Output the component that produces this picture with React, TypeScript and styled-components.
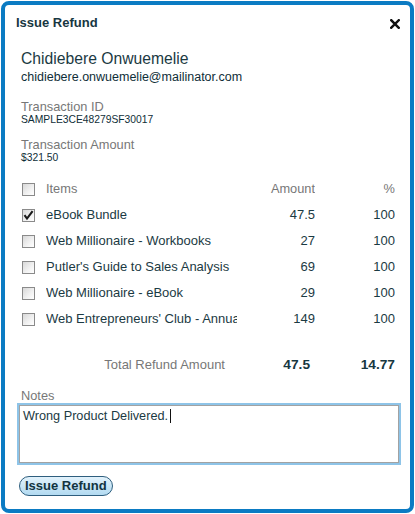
import React from 'react';
import styled, { createGlobalStyle } from 'styled-components';

const GlobalStyle = createGlobalStyle`
  html, body {
    margin: 0;
    padding: 0;
    background: #fff;
  }
  body {
    font-family: "Liberation Sans", Arial, sans-serif;
    color: #1b3a43;
  }
  * { box-sizing: border-box; }
`;

type Item = { name: string; amount: string; percent: string; checked?: boolean };

const items: Item[] = [
  { name: 'eBook Bundle', amount: '47.5', percent: '100', checked: true },
  { name: 'Web Millionaire - Workbooks', amount: '27', percent: '100' },
  { name: "Putler's Guide to Sales Analysis", amount: '69', percent: '100' },
  { name: 'Web Millionaire - eBook', amount: '29', percent: '100' },
  { name: "Web Entrepreneurs' Club - Annual Membership", amount: '149', percent: '100' },
];

// --- Components ---
const CheckBox: React.FC<{ checked?: boolean }> = ({ checked }) => (
  <Box>
    {checked && (
      <svg width="11" height="11" viewBox="0 0 11 11">
        <path d="M1.5 5.2 L4 8.6 L9.6 1.2" fill="none" stroke="#1a1a1a" strokeWidth="2.1" />
      </svg>
    )}
  </Box>
);

const CloseIcon = () => (
  <svg width="10" height="10" viewBox="0 0 10 10">
    <path d="M1.2 1.2 L8.8 8.8 M8.8 1.2 L1.2 8.8" stroke="#111" strokeWidth="2.4" strokeLinecap="square" />
  </svg>
);

const App = () => (
  <>
    <GlobalStyle />
    <Dialog>
      <Header>
        <Title>Issue Refund</Title>
        <CloseButton aria-label="Close">
          <CloseIcon />
        </CloseButton>
      </Header>

      <Body>
        <Customer>
          <CustomerName>Chidiebere Onwuemelie</CustomerName>
          <CustomerEmail>chidiebere.onwuemelie@mailinator.com</CustomerEmail>
        </Customer>

        <Field>
          <FieldLabel>Transaction ID</FieldLabel>
          <FieldValue>SAMPLE3CE48279SF30017</FieldValue>
        </Field>

        <Field>
          <FieldLabel>Transaction Amount</FieldLabel>
          <FieldValue>$321.50</FieldValue>
        </Field>

        <ItemsTable>
          <Row>
            <CheckCell>
              <CheckBox />
            </CheckCell>
            <HeadCell>Items</HeadCell>
            <HeadCell $right>Amount</HeadCell>
            <HeadCell $right>%</HeadCell>
          </Row>
          {items.map((it) => (
            <Row key={it.name}>
              <CheckCell>
                <CheckBox checked={it.checked} />
              </CheckCell>
              <NameCell>{it.name}</NameCell>
              <NumCell>{it.amount}</NumCell>
              <NumCell>{it.percent}</NumCell>
            </Row>
          ))}
          <TotalRow>
            <TotalLabel>Total Refund Amount</TotalLabel>
            <TotalValue $pad={5}>47.5</TotalValue>
            <TotalValue $pad={0}>14.77</TotalValue>
          </TotalRow>
        </ItemsTable>

        <NotesLabel>Notes</NotesLabel>
        <NotesBox role="textbox">
          Wrong Product Delivered.<Caret />
        </NotesBox>

        <RefundButton>Issue Refund</RefundButton>
      </Body>
    </Dialog>
  </>
);

export default App;

// --- STYLES ---
const Dialog = styled.div`
  width: 413px;
  height: 512px;
  margin: 1px 0 0 1px;
  border: 4px solid #0b7bc3;
  border-radius: 8px;
  background: #fff;
  display: flex;
  flex-direction: column;
  overflow: hidden;
`;

const Header = styled.div`
  display: flex;
  align-items: center;
  justify-content: space-between;
  padding: 10px 10px 0 11px;
  height: 26px;
`;

const Title = styled.h2`
  margin: 0;
  font-size: 13px;
  line-height: 16px;
  font-weight: bold;
  color: #173741;
`;

const CloseButton = styled.span`
  display: flex;
  width: 10px;
  height: 10px;
  margin-top: 1px;
  cursor: pointer;
`;

const Body = styled.div`
  display: flex;
  flex-direction: column;
  align-items: flex-start;
  padding: 0 9px 0 12px;
`;

const Customer = styled.div`
  display: flex;
  flex-direction: column;
  margin: 18px 0 0 4px;
`;

const CustomerName = styled.div`
  font-size: 15.7px;
  line-height: 20px;
  color: #1b3a43;
`;

const CustomerEmail = styled.div`
  font-size: 12.5px;
  line-height: 16px;
  color: #0f2e38;
`;

const Field = styled.div`
  display: flex;
  flex-direction: column;
  margin: 15px 0 0 4px;

  & + & {
    margin-top: 12px;
  }
`;

const FieldLabel = styled.div`
  font-size: 12.8px;
  line-height: 14px;
  color: #777;
`;

const FieldValue = styled.div`
  font-size: 10.3px;
  line-height: 12px;
  color: #0f2e38;
`;

const ItemsTable = styled.div`
  display: grid;
  grid-template-columns: 24px 191px 78px 80px;
  margin: 12px 0 0 5px;
`;

const Row = styled.div`
  display: contents;
`;

const cell = `
  height: 26px;
  line-height: 26px;
  font-size: 13px;
  white-space: nowrap;
  overflow: hidden;
`;

const CheckCell = styled.div`
  height: 26px;
  display: flex;
  align-items: center;
`;

const Box = styled.span`
  width: 13px;
  height: 13px;
  border: 1px solid #8a8a8a;
  background: linear-gradient(135deg, #d8d8d8 0%, #f2f2f2 60%, #ffffff 100%);
  display: flex;
  align-items: center;
  justify-content: center;
`;

const HeadCell = styled.div<{ $right?: boolean }>`
  ${cell}
  font-size: 12.8px;
  color: #777;
  text-align: ${(p) => (p.$right ? 'right' : 'left')};
`;

const NameCell = styled.div`
  ${cell}
  color: #1b3a43;
`;

const NumCell = styled.div`
  ${cell}
  color: #1b3a43;
  text-align: right;
`;

const TotalRow = styled.div`
  display: contents;
`;

const TotalLabel = styled.div`
  ${cell}
  grid-column: 1 / 3;
  margin-top: 20px;
  padding-right: 12px;
  text-align: right;
  color: #777;
`;

const TotalValue = styled.div<{ $pad: number }>`
  ${cell}
  margin-top: 20px;
  padding-right: ${(p) => p.$pad}px;
  text-align: right;
  font-size: 13.7px;
  font-weight: bold;
  color: #173741;
`;

const NotesLabel = styled.div`
  margin: 11px 0 0 4px;
  font-size: 12.8px;
  line-height: 14px;
  color: #777;
`;

const NotesBox = styled.div`
  width: 384px;
  height: 62px;
  padding: 4px 2px 2px 4px;
  border: 2px solid #8ec4e8;
  box-shadow: inset 0 0 0 1px #a2a2a2;
  font-size: 12.7px;
  line-height: 15px;
  color: #1b3a43;
`;

const Caret = styled.span`
  display: inline-block;
  width: 1px;
  height: 14px;
  margin-left: 2px;
  vertical-align: -3px;
  background: #111;
`;

const RefundButton = styled.button`
  margin: 11px 0 0 2px;
  height: 20px;
  padding: 0 5px;
  border: 1px solid #2e5e7e;
  border-radius: 10px;
  background: linear-gradient(#e2f2fb, #b2daf1);
  font-family: "Liberation Sans", Arial, sans-serif;
  font-size: 13px;
  font-weight: bold;
  line-height: 18px;
  color: #123440;
  cursor: pointer;
`;
